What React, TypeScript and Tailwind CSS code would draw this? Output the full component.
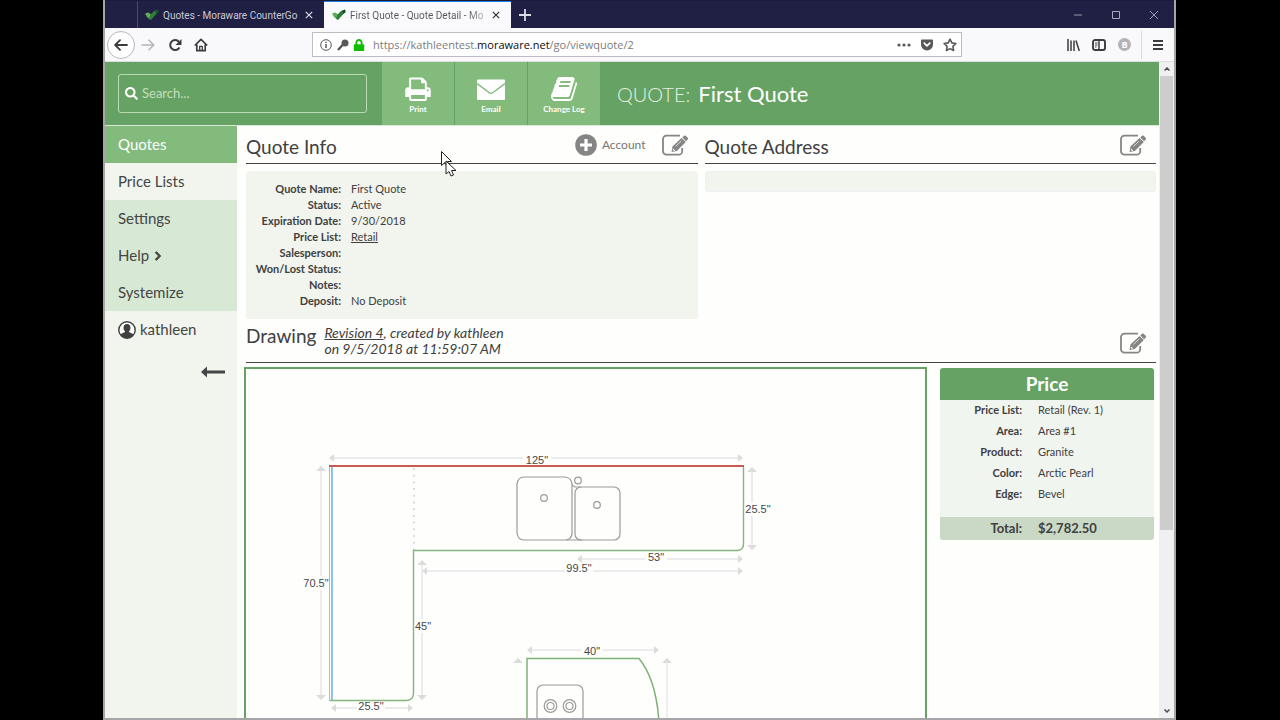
import type { ReactNode } from "react";
import { FaChevronRight, FaLock, FaSearch } from "react-icons/fa";

const ui = "font-['Open_Sans','Noto_Sans',sans-serif]";

function LeafIcon() {
  return (
    <svg viewBox="0 0 14 12" className="h-3 w-3.5 shrink-0" aria-hidden="true">
      <path d="M0 4.500l3.500-1L6 5.500l-.5 5.500L2 8z" fill="#5fae5c" />
      <path d="M5.500 5.500L9 2l4-1.500.5 2.500L10 6.500 6 11 4 9.500z" fill="#2f7d3a" />
      <path d="M10 2l3-1.500.5 2.500-2 2z" fill="#1b4f2a" />
    </svg>
  );
}

function CloseIcon({ className }: { className: string }) {
  return (
    <svg viewBox="0 0 10 10" className={className} fill="none" stroke="currentColor" strokeWidth="1.5" aria-hidden="true">
      <path d="M1 1l8 8M9 1l-8 8" />
    </svg>
  );
}

function BrowserTab({ title, active }: { title: string; active?: boolean }) {
  return (
    <div
      className={
        active
          ? "flex w-[187px] items-center border-t border-[#1a7fe0] bg-[#fafafc] pl-2 text-[#55555c]"
          : "flex w-[187px] items-center border-l border-t border-t-transparent border-l-[#4a4b70] pl-[7px] text-[#c9c9d6]"
      }
    >
      <LeafIcon />
      <span
        className={
          active
            ? "ml-1 w-[137px] bg-linear-to-r from-[#55555c] from-85% to-[#c4c4ca] bg-clip-text font-['Roboto',sans-serif] text-[10px] whitespace-nowrap text-transparent"
            : "ml-1 w-[137px] font-['Roboto',sans-serif] text-[10px] whitespace-nowrap"
        }
      >
        {title}
      </span>
      <button aria-label="Close tab" className={active ? "ml-[5px] text-[#333]" : "ml-[5px] text-[#d8d8e4]"}>
        <CloseIcon className="h-2 w-2" />
      </button>
    </div>
  );
}

function TabStrip() {
  return (
    <div className="flex h-7 shrink-0 border-t border-[#1a1b38] bg-[#1f2044] pl-8">
      <BrowserTab title="Quotes - Moraware CounterGo" />
      <BrowserTab title="First Quote - Quote Detail - Mo" active />
      <button aria-label="New tab" className="ml-2 text-[#dcdce6]">
        <svg viewBox="0 0 12 12" className="h-3 w-3" stroke="currentColor" strokeWidth="1.8" aria-hidden="true">
          <path d="M6 0v12M0 6h12" />
        </svg>
      </button>
      <div className="ml-auto flex items-center gap-[30px] pr-4 text-[#a9a9bd]">
        <button aria-label="Minimize">
          <svg viewBox="0 0 9 9" className="h-2 w-2" stroke="currentColor" aria-hidden="true">
            <path d="M0 4.500h9" />
          </svg>
        </button>
        <button aria-label="Maximize" className="block">
          <svg viewBox="0 0 8 8" className="h-2 w-2" fill="none" stroke="currentColor" aria-hidden="true">
            <path d="M.5 .5h7v7h-7z" />
          </svg>
        </button>
        <button aria-label="Close window">
          <svg viewBox="0 0 8 8" className="h-2 w-2" stroke="currentColor" strokeWidth=".9" aria-hidden="true">
            <path d="M0 0l8 8M8 0l-8 8" />
          </svg>
        </button>
      </div>
    </div>
  );
}

function NavigationBar() {
  return (
    <div className="flex h-[34px] shrink-0 items-center border-b border-[#dcdfdc] bg-[#f9f9fb] text-[#3c3c3e]">
      <button aria-label="Back" className="ml-0.5 flex h-7 w-7 items-center justify-center rounded-full border border-[#b9b9bc] bg-white">
        <svg viewBox="0 0 14 12" className="h-3 w-3.5" fill="none" stroke="currentColor" strokeWidth="1.8" strokeLinecap="round" strokeLinejoin="round" aria-hidden="true">
          <path d="M13 6H1.500M6 1.200L1.200 6 6 10.800" />
        </svg>
      </button>
      <button aria-label="Forward" className="ml-1.5 text-[#b5b5b8]">
        <svg viewBox="0 0 14 12" className="h-3 w-3.5" fill="none" stroke="currentColor" strokeWidth="1.6" strokeLinecap="round" strokeLinejoin="round" aria-hidden="true">
          <path d="M1 6h11.500M8 1.200L12.800 6 8 10.800" />
        </svg>
      </button>
      <button aria-label="Reload" className="ml-[13px]">
        <svg viewBox="0 0 14 14" className="h-3.5 w-3.5" aria-hidden="true">
          <path d="M11.500 9.500A5 5 0 1 1 11 3.800" fill="none" stroke="currentColor" strokeWidth="2" />
          <path d="M13.500 1v6h-6z" fill="currentColor" />
        </svg>
      </button>
      <button aria-label="Home" className="ml-3">
        <svg viewBox="0 0 14 14" className="h-3.5 w-3.5" fill="none" stroke="currentColor" strokeWidth="1.7" strokeLinejoin="round" aria-hidden="true">
          <path d="M.8 7.500L7 1.300l6.200 6.200M2.800 6.500v6.200h8.400V6.500" />
          <path d="M5.700 12.500V8.300h2.600v4.200" strokeWidth="1.300" />
        </svg>
      </button>
      <div className="ml-[104px] flex h-[25px] w-[650px] items-center border border-[#bdbdc1] bg-white pr-1 pl-[7px]">
        <svg viewBox="0 0 12 12" className="h-3 w-3 shrink-0" fill="none" stroke="#58585b" aria-hidden="true">
          <circle cx="6" cy="6" r="5.300" />
          <path d="M6 5v4M6 2.800v1.200" strokeWidth="1.500" />
        </svg>
        <svg viewBox="0 0 12 12" className="ml-[5px] h-3 w-3 shrink-0" aria-hidden="true">
          <circle cx="8" cy="4" r="3.500" fill="#58585b" />
          <path d="M6 5.500L1 11" stroke="#58585b" strokeWidth="2.400" />
        </svg>
        <FaLock className="ml-1 h-3 w-3 shrink-0 text-[#12bc00]" />
        <div className="relative ml-2 h-4 flex-1 text-[11px] leading-4 whitespace-nowrap text-[#7c7c80]">
          <input aria-label="Address" className="absolute inset-0 w-full bg-transparent outline-none" />
          <span className="pointer-events-none">
            https://kathleentest.<span className="text-[#0c0c0d]">moraware.net</span>/go/viewquote/2
          </span>
        </div>
        <button aria-label="Page actions">
          <svg viewBox="0 0 14 4" className="h-1 w-3.5" fill="#58585b" aria-hidden="true">
            <circle cx="2" cy="2" r="1.600" />
            <circle cx="7" cy="2" r="1.600" />
            <circle cx="12" cy="2" r="1.600" />
          </svg>
        </button>
        <button aria-label="Save to Pocket" className="ml-[9px]">
          <svg viewBox="0 0 14 13" className="h-3 w-3.5" aria-hidden="true">
            <path d="M1.500 .5h11a1 1 0 0 1 1 1V6a6.500 6.500 0 0 1-13 0V1.500a1 1 0 0 1 1-1z" fill="#58585b" />
            <path d="M4 4.500l3 3 3-3" fill="none" stroke="#fff" strokeWidth="1.800" strokeLinecap="round" />
          </svg>
        </button>
        <button aria-label="Bookmark" className="ml-[9px]">
          <svg viewBox="0 0 14 14" className="h-3.5 w-3.5" fill="none" stroke="#58585b" strokeWidth="1.600" strokeLinejoin="round" aria-hidden="true">
            <path d="M7 1.200l1.800 3.700 4.100.6-3 2.900.7 4.100L7 10.600l-3.600 1.900.7-4.100-3-2.900 4.100-.6z" />
          </svg>
        </button>
      </div>
      <div className="ml-auto flex items-center">
        <button aria-label="Library">
          <svg viewBox="0 0 13 12" className="h-3 w-[13px]" fill="none" stroke="currentColor" strokeWidth="1.500" aria-hidden="true">
            <path d="M1 0v12M4 1.500V12M7 1.500V12M9 1.500L12.300 12" />
          </svg>
        </button>
        <button aria-label="Sidebars" className="ml-3">
          <svg viewBox="0 0 14 12" className="h-3 w-3.5" fill="none" stroke="currentColor" aria-hidden="true">
            <rect x="1" y="1" width="12" height="10" rx="2" strokeWidth="1.900" />
            <path d="M7 1v10" strokeWidth="1.500" />
            <path d="M3 4h2.500M3 6h2.500M3 8h1.500" />
          </svg>
        </button>
        <button aria-label="Account B" className="ml-3 flex h-[13px] w-[13px] items-center justify-center rounded-full bg-[#b3b3b5] text-[9px] leading-none font-bold text-white">
          B
        </button>
        <div className="ml-2.5 h-7 w-px bg-[#dadadd]" />
        <button aria-label="Open menu" className="mr-[11px] ml-[11px]">
          <svg viewBox="0 0 10 10" className="h-2.5 w-2.5" stroke="currentColor" strokeWidth="1.800" aria-hidden="true">
            <path d="M0 1h10M0 5h10M0 9h10" />
          </svg>
        </button>
      </div>
    </div>
  );
}

function HeaderButton({ label, children }: { label: string; children: ReactNode }) {
  return (
    <button className="flex w-[72px] flex-col items-center bg-[#83bb7c] pt-[15px] text-white">
      {children}
      <span className="mt-0.5 text-[8px] leading-3 font-bold">{label}</span>
    </button>
  );
}

function AppHeader() {
  return (
    <header className="flex h-[63px] shrink-0 bg-[#66a264]">
      <div className="mt-3 ml-[13px] flex h-[39px] w-[249px] items-center rounded-[3px] border border-[#b9dcb3] pl-1.5 text-white">
        <FaSearch className="h-[13px] w-[13px]" />
        <input
          aria-label="Search"
          placeholder="Search..."
          className="ml-1 w-48 bg-transparent text-[13px] outline-none placeholder:text-[#c3dfbe]"
        />
      </div>
      <div className="ml-[15px] flex gap-px">
        <HeaderButton label="Print">
          <svg viewBox="64 100 1664 1564" className="h-6 w-[26px]" fill="currentColor" aria-hidden="true">
            <path d="M448 1536h896v-256h-896v256zm0-640h896v-384h-160q-40 0-68-28t-28-68v-160h-640v640zm1152 64q0-26-19-45t-45-19-45 19-19 45 19 45 45 19 45-19 19-45zm128 0v416q0 13-9.500 22.500t-22.500 9.500h-224v160q0 40-28 68t-68 28h-960q-40 0-68-28t-28-68v-160h-224q-13 0-22.500-9.500t-9.500-22.500v-416q0-79 56.500-135.500t135.500-56.500h64v-544q0-40 28-68t68-28h672q40 0 88 20t76 48l152 152q28 28 48 76t20 88v256h64q79 0 135.500 56.500t56.500 135.500z" />
          </svg>
        </HeaderButton>
        <HeaderButton label="Email">
          <svg viewBox="0 0 28 24" className="h-6 w-7" aria-hidden="true">
            <rect x="0" y="2.500" width="28" height="20.500" rx="1" fill="#fff" />
            <path d="M0 6.500l12 9q2 1.500 4 0L28 6.500" fill="none" stroke="#83bb7c" strokeWidth="1.500" />
          </svg>
        </HeaderButton>
        <HeaderButton label="Change Log">
          <svg viewBox="0 128 1664 1536" className="h-6 w-[26px]" fill="currentColor" aria-hidden="true">
            <path d="M1639 478q40 57 18 129l-275 906q-19 64-76.500 107.500t-122.500 43.500h-923q-77 0-148.500-53.500t-99.500-131.500q-24-67-2-127 0-4 3-27t4-37q1-8-3-21.500t-3-19.500q2-11 8-21t16.500-23.500 16.500-23.500q23-38 45-91.500t30-91.500q3-10 .5-30t-.5-28q3-11 17-28t17-23q21-36 42-92t25-90q1-9-2.500-32t.5-28q4-13 22-30.500t22-22.500q19-26 42.500-84.500t27.500-96.500q1-8-3-25.500t-2-26.500q2-8 9-18t18-23 17-21q8-12 16.500-30.500t15-35 16-36 19.500-32 26.500-23.500 36-11.500 47.500 5.500l-1 3q38-9 51-9h761q74 0 114 56t18 130l-274 906q-36 119-71.500 153.500t-128.500 34.500h-869q-27 0-38 15-11 16-1 43 24 70 144 70h923q29 0 56-15.500t35-41.500l300-987q7-22 5-57 38 15 59 43zm-1064 2q-4 13 2 22.500t20 9.500h608q13 0 25.500-9.500t16.500-22.500l21-64q4-13-2-22.500t-20-9.500h-608q-13 0-25.500 9.500t-16.500 22.500zm-83 256q-4 13 2 22.500t20 9.500h608q13 0 25.500-9.500t16.500-22.500l21-64q4-13-2-22.500t-20-9.500h-608q-13 0-25.500 9.500t-16.500 22.500z" />
          </svg>
        </HeaderButton>
      </div>
      <h1 className="ml-[17px] self-center text-[22px] text-white">
        <span className="mr-2 text-[20px] font-light text-[#e3f1e0]">QUOTE:</span>
        First Quote
      </h1>
    </header>
  );
}

function Sidebar() {
  return (
    <nav className="w-[132px] shrink-0 bg-[#f1f5ee] text-[15px] text-[#454545]">
      <a href="#quotes" className="flex h-[37px] items-center bg-[#83bb7c] pl-[13px] text-white">Quotes</a>
      <a href="#prices" className="flex h-[37px] items-center pl-[13px]">Price Lists</a>
      <div className="bg-[#d7e9d5]">
        <a href="#settings" className="flex h-[37px] items-center pl-[13px]">Settings</a>
        <a href="#help" className="flex h-[37px] items-center gap-1 pl-[13px]">
          Help
          <FaChevronRight className="h-2.5 w-2.5" stroke="currentColor" strokeWidth="50" />
        </a>
        <a href="#systemize" className="flex h-[37px] items-center pl-[13px]">Systemize</a>
      </div>
      <a href="#profile" className="flex h-[37px] items-center gap-1 pl-[13px]">
        <svg viewBox="0 0 18 18" className="h-[18px] w-[18px]" aria-hidden="true">
          <circle cx="9" cy="9" r="8.200" fill="#fff" stroke="#404040" strokeWidth="1.400" />
          <path d="M9 3c2.300 0 3.500 1.600 3.500 3.700 0 1.500-.7 3-1.600 3.700.3 1.200 2.600 1.200 4.600 2.900A8 8 0 0 1 9 17.300a8 8 0 0 1-6.500-4c2-1.700 4.300-1.700 4.600-2.900-.9-.7-1.600-2.200-1.600-3.700C5.500 4.600 6.700 3 9 3z" fill="#404040" />
        </svg>
        kathleen
      </a>
      <button aria-label="Collapse menu" className="mt-[18px] ml-24 block">
        <svg viewBox="0 0 24 12" className="h-3 w-6" fill="#454545" aria-hidden="true">
          <path d="M0 6l6-5.500V4.500h18v3H6v4z" />
        </svg>
      </button>
    </nav>
  );
}

function EditButton({ label }: { label: string }) {
  return (
    <button aria-label={label}>
      <svg viewBox="0 0 26 22" className="h-[22px] w-[26px]" aria-hidden="true">
        <path d="M18 1.700H4.500A3.500 3.500 0 0 0 1 5.200v12a3.500 3.500 0 0 0 3.500 3.500h12.200a3.500 3.500 0 0 0 3.500-3.500V14" fill="none" stroke="#858585" strokeWidth="1.800" />
        <path d="M9.500 18l1-5.500L19.500 4l4.300 4-9 9z" fill="#858585" />
        <path d="M20.300 3.500l1.700-1.700q.8-.8 1.700 0l2 2q.8.800 0 1.700l-1.600 1.700z" fill="#858585" />
        <path d="M11 15.200l1.600 1.600" stroke="#fff" strokeWidth="1.200" />
        <path d="M13.500 12.500l5.800-5.600" stroke="#fff" strokeWidth=".7" />
      </svg>
    </button>
  );
}

const quoteFields: { label: string; value: ReactNode }[] = [
  { label: "Quote Name:", value: "First Quote" },
  { label: "Status:", value: "Active" },
  { label: "Expiration Date:", value: "9/30/2018" },
  { label: "Price List:", value: <a href="#retail" className="underline">Retail</a> },
  { label: "Salesperson:", value: "" },
  { label: "Won/Lost Status:", value: "" },
  { label: "Notes:", value: "" },
  { label: "Deposit:", value: "No Deposit" },
];

function QuoteInfo() {
  return (
    <section>
      <div className="flex h-[37px] items-center border-b border-[#454545] pt-1">
        <h2 className="text-[19px]">Quote Info</h2>
        <button className="mb-1 ml-auto flex items-center gap-[5px] text-[12px] text-[#757575]">
          <svg viewBox="0 0 22 22" className="h-[22px] w-[22px]" aria-hidden="true">
            <circle cx="11" cy="11" r="10.800" fill="#858585" />
            <path d="M11 5v12M5 11h12" stroke="#fff" strokeWidth="3.200" />
          </svg>
          Account
        </button>
        <div className="mr-2.5 mb-1 ml-4 flex">
          <EditButton label="Edit quote info" />
        </div>
      </div>
      <table className="mt-[7px] block rounded-[3px] bg-[#f2f5ee] py-2.5 text-[11px] leading-4">
        <tbody>
          {quoteFields.map((f) => (
            <tr key={f.label} className="h-4">
              <th scope="row" className="w-[95px] p-0 text-right font-bold whitespace-nowrap">{f.label}</th>
              <td className="p-0 pl-2.5">{f.value}</td>
            </tr>
          ))}
        </tbody>
      </table>
    </section>
  );
}

function QuoteAddress() {
  return (
    <section>
      <div className="flex h-[37px] items-center justify-between border-b border-[#454545] pt-1">
        <h2 className="text-[19px]">Quote Address</h2>
        <div className="mr-2.5 mb-1 flex">
          <EditButton label="Edit quote address" />
        </div>
      </div>
      <div className="mt-[7px] h-[21px] rounded-[3px] border border-[#eef1f2] bg-[#f2f5ee]" />
    </section>
  );
}

type Point = [number, number];

function Dimension({ from, to, label, at, gap }: { from: Point; to: Point; label: string; at: Point; gap: number }) {
  const [x1, y1] = from;
  const [x2, y2] = to;
  const horizontal = y1 === y2;
  const arrows = horizontal
    ? `M${x1} ${y1}l5-4v8zM${x2} ${y2}l-5-4v8z`
    : `M${x1} ${y1}l-5 5h10zM${x2} ${y2}l-5-5h10z`;
  const lines = horizontal
    ? `M${x1 + 4} ${y1}H${at[0] - gap}M${at[0] + gap} ${y1}H${x2 - 4}`
    : `M${x1} ${y1 + 4}V${at[1] - gap}M${x1} ${at[1] + gap}V${y2 - 4}`;
  return (
    <g>
      <path d={lines} stroke="#e6e6ea" strokeWidth="1.500" fill="none" />
      <path d={arrows} fill="#dcdcdc" />
      <text x={at[0]} y={at[1] + 4} textAnchor="middle" fontSize="11" fill="#484848">
        {label}
      </text>
    </g>
  );
}

function CounterDrawing() {
  return (
    <svg className="block h-[520px] w-full font-['Liberation_Sans',sans-serif]" role="img" aria-label="Countertop drawing">
      <g transform="translate(-246 -369)">
        <Dimension from={[329, 458]} to={[743, 458]} label={'125"'} at={[537, 460]} gap={14} />
        <Dimension from={[321, 466]} to={[321, 700]} label={'70.5"'} at={[316, 583]} gap={7} />
        <Dimension from={[752, 467]} to={[752, 550]} label={'25.5"'} at={[758, 509]} gap={7} />
        <Dimension from={[577, 559]} to={[743, 559]} label={'53"'} at={[656, 557]} gap={11} />
        <Dimension from={[422, 571]} to={[743, 571]} label={'99.5"'} at={[579, 568]} gap={14} />
        <Dimension from={[422, 560]} to={[422, 700]} label={'45"'} at={[423, 626]} gap={7} />
        <Dimension from={[331, 708]} to={[413, 708]} label={'25.5"'} at={[371, 706]} gap={14} />
        <Dimension from={[527, 650]} to={[659, 650]} label={'40"'} at={[592, 651]} gap={11} />
        <path d="M518 658l-5 5h10zM667 658l-5 5h10z" fill="#dcdcdc" />
        <path d="M667 662V760" stroke="#e0e0e4" />

        <path d="M414 468V550" stroke="#cfcfcf" strokeWidth="1.500" strokeDasharray="2 4.700" />
        <path d="M743.500 467V544q0 6-6 6.500H413.500V693q0 7-7 7.500H330" fill="none" stroke="#84b57e" strokeWidth="1.400" />
        <path d="M331.500 467V700" stroke="#b2b2ba" />
        <path d="M329.500 466V701M332.500 467V700" stroke="#8fc6ee" />
        <path d="M329 466H744" stroke="#c75a52" strokeWidth="1.800" />

        <g fill="none" stroke="#9a9a9a" strokeWidth="1.200">
          <path d="M524 477H565q7 1 7 8V533q0 6-6 7H524q-6 0-7-7V484q1-7 7-7z" />
          <rect x="575" y="487" width="45" height="53" rx="6" />
          <path d="M572 485l3 2h6M566 540H582" />
          <circle cx="544" cy="498" r="3.300" />
          <circle cx="597" cy="505" r="3.300" />
          <circle cx="578" cy="480.500" r="3.300" />
          <rect x="537" y="685" width="46" height="80" rx="6" />
          <circle cx="550.500" cy="706" r="6.300" />
          <circle cx="550.500" cy="706" r="3.500" />
          <circle cx="569.500" cy="706" r="6.300" />
          <circle cx="569.500" cy="706" r="3.500" />
        </g>
        <path d="M527 760V658.500H639Q655 678 658.500 716V760" fill="none" stroke="#7db276" strokeWidth="1.500" />
      </g>
    </svg>
  );
}

const priceRows = [
  ["Price List:", "Retail (Rev. 1)"],
  ["Area:", "Area #1"],
  ["Product:", "Granite"],
  ["Color:", "Arctic Pearl"],
  ["Edge:", "Bevel"],
];

function PricePanel() {
  return (
    <aside className="mt-px mr-0.5 ml-[13px] w-[214px] shrink-0 self-start overflow-hidden rounded-[3px] bg-[#f1f5f0]">
      <h2 className="bg-[#66a264] text-center text-[19px] leading-8 font-bold text-white">Price</h2>
      <table className="w-full text-[11px]">
        <tbody>
          {priceRows.map(([label, value]) => (
            <tr key={label} className="h-[21px]">
              <th scope="row" className="w-[82px] p-0 text-right font-bold">{label}</th>
              <td className="p-0 pl-4">{value}</td>
            </tr>
          ))}
          <tr className="h-3"><td colSpan={2} /></tr>
          <tr className="h-[23px] bg-[#c9d9c5] text-[13px] font-bold">
            <th scope="row" className="p-0 text-right">Total:</th>
            <td className="p-0 pl-4">$2,782.50</td>
          </tr>
        </tbody>
      </table>
    </aside>
  );
}

function Scrollbar() {
  return (
    <div className="flex w-[15px] shrink-0 flex-col items-center bg-[#f0f0f2]" aria-hidden="true">
      <svg viewBox="0 0 6 4" className="my-[5px] h-1 w-1.5 shrink-0" fill="none" stroke="#505050" strokeWidth="1.500">
        <path d="M.5 3.500L3 1l2.500 2.500" />
      </svg>
      <div className="h-[454px] w-[13px] bg-[#cdcdcd]" />
      <svg viewBox="0 0 6 4" className="mt-auto mb-[5px] h-1 w-1.5 shrink-0" fill="none" stroke="#505050" strokeWidth="1.500">
        <path d="M.5 .5L3 3 5.500 .5" />
      </svg>
    </div>
  );
}

function Pointer() {
  return (
    <svg viewBox="0 0 18 28" className="pointer-events-none absolute top-[151px] left-[440px] h-7 w-[18px]" aria-hidden="true">
      <path d="M1.500 .5v14l3.500-3 2 4.500 2.500-1-2-4.500h4z" fill="#fff" stroke="#222" />
      <path d="M6 10v13l3-2.500 2 4.500 2.500-1-2-4.500h4.500z" fill="#fff" stroke="#222" />
    </svg>
  );
}

export default function App() {
  return (
    <div className="relative flex h-screen bg-black pr-[104px] pl-[103px]">
      <div className="flex min-w-0 flex-1 flex-col border-x-2 border-b-2 border-[#a6a6a8] bg-[#fefefd]">
        <div className={ui}>
          <TabStrip />
          <NavigationBar />
        </div>
        <div className="flex min-h-0 flex-1 font-['Lato',sans-serif] text-[#404040]">
          <div className="flex min-w-0 flex-1 flex-col">
            <AppHeader />
            <div className="flex min-h-0 flex-1 border-t border-[#d7e9d5]">
              <Sidebar />
              <main className="flex min-w-0 flex-1 flex-col overflow-hidden pt-px pr-[3px] pl-[9px]">
                <div className="grid grid-cols-2 gap-[7px]">
                  <QuoteInfo />
                  <QuoteAddress />
                </div>
                <div className="flex h-11 shrink-0 items-center border-b border-[#454545]">
                  <h2 className="mb-2 text-[19px]">Drawing</h2>
                  <p className="ml-2 text-[14px] leading-4 italic">
                    <a href="#revision" className="underline">Revision 4</a>, created by kathleen
                    <br />
                    on 9/5/2018 at 11:59:07 AM
                  </p>
                  <div className="mt-1 mr-2.5 ml-auto flex">
                    <EditButton label="Edit drawing" />
                  </div>
                </div>
                <div className="mt-1 -ml-0.5 flex min-h-0 flex-1">
                  <div className="h-[524px] min-w-0 flex-1 border-2 border-[#66a264]">
                    <CounterDrawing />
                  </div>
                  <PricePanel />
                </div>
              </main>
            </div>
          </div>
          <Scrollbar />
        </div>
      </div>
      <Pointer />
    </div>
  );
}
